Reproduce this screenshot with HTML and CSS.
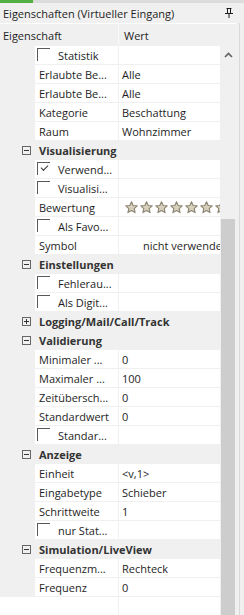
FILE: index.html
```html
<!DOCTYPE html>
<html lang="de">
<head>
    <meta charset="UTF-8">
    <title>Eigenschaften</title>
    <link rel="stylesheet" href="styles.css">
</head>
<body>
<div class="window">
    <div class="tabstrip"><span class="tab-accent"></span></div>
    <div class="titlebar">
        <span class="title">Eigenschaften (Virtueller Eingang)</span>
        <svg class="pin" width="8" height="10" viewBox="0 0 8 10">
            <path d="M1.5 0.5h5M2.5 0.5v5M5.5 0.5v5M0 5.5h8M4 5.5v4.5" stroke="#1e1e1e" stroke-width="1" fill="none"/>
            <rect x="2" y="1" width="1" height="4" fill="#1e1e1e"/>
        </svg>
    </div>
    <div class="content">
        <div class="grid">
            <div class="header">
                <div class="hcell hname">Eigenschaft</div>
                <div class="hcell hvalue">Wert</div>
            </div>
            <div class="body">
                <div class="rows">
                    <div class="row"><div class="gutter"></div><div class="name check"><span class="box"></span>Statistik</div><div class="value"></div></div>
                    <div class="row"><div class="gutter"></div><div class="name">Erlaubte Be...</div><div class="value">Alle</div></div>
                    <div class="row"><div class="gutter"></div><div class="name">Erlaubte Be...</div><div class="value">Alle</div></div>
                    <div class="row"><div class="gutter"></div><div class="name">Kategorie</div><div class="value">Beschattung</div></div>
                    <div class="row"><div class="gutter"></div><div class="name">Raum</div><div class="value">Wohnzimmer</div></div>

                    <div class="row cat"><div class="gutter"><span class="toggle"></span></div><div class="cat-label">Visualisierung</div></div>
                    <div class="row"><div class="gutter"></div><div class="name check"><span class="box checked"></span>Verwend...</div><div class="value"></div></div>
                    <div class="row"><div class="gutter"></div><div class="name check"><span class="box"></span>Visualisi...</div><div class="value"></div></div>
                    <div class="row"><div class="gutter"></div><div class="name">Bewertung</div><div class="value stars">
                        <svg width="110" height="13" viewBox="0 0 110 13">
                            <defs>
                                <path id="star" d="M6.5 0.8l1.7 3.7 4 0.4-3 2.7 0.9 4-3.6-2.1-3.6 2.1 0.9-4-3-2.7 4-0.4z"/>
                            </defs>
                            <g fill="#d6d0bd" stroke="#8c8470" stroke-width="1.1" stroke-linejoin="round">
                                <use href="#star" x="0"/>
                                <use href="#star" x="15"/>
                                <use href="#star" x="30"/>
                                <use href="#star" x="45"/>
                                <use href="#star" x="60"/>
                                <use href="#star" x="75"/>
                                <use href="#star" x="90"/>
                            </g>
                        </svg>
                    </div></div>
                    <div class="row"><div class="gutter"></div><div class="name check"><span class="box"></span>Als Favo...</div><div class="value"></div></div>
                    <div class="row"><div class="gutter"></div><div class="name">Symbol</div><div class="value indent">nicht verwendet</div></div>

                    <div class="row cat"><div class="gutter"><span class="toggle"></span></div><div class="cat-label">Einstellungen</div></div>
                    <div class="row"><div class="gutter"></div><div class="name check"><span class="box"></span>Fehlerau...</div><div class="value"></div></div>
                    <div class="row"><div class="gutter"></div><div class="name check"><span class="box"></span>Als Digit...</div><div class="value"></div></div>

                    <div class="row cat"><div class="gutter"><span class="toggle plus"></span></div><div class="cat-label">Logging/Mail/Call/Track</div></div>

                    <div class="row cat"><div class="gutter"><span class="toggle"></span></div><div class="cat-label">Validierung</div></div>
                    <div class="row"><div class="gutter"></div><div class="name">Minimaler ...</div><div class="value">0</div></div>
                    <div class="row"><div class="gutter"></div><div class="name">Maximaler ...</div><div class="value">100</div></div>
                    <div class="row"><div class="gutter"></div><div class="name">Zeitübersch...</div><div class="value">0</div></div>
                    <div class="row"><div class="gutter"></div><div class="name">Standardwert</div><div class="value">0</div></div>
                    <div class="row"><div class="gutter"></div><div class="name check"><span class="box"></span>Standar...</div><div class="value"></div></div>

                    <div class="row cat"><div class="gutter"><span class="toggle"></span></div><div class="cat-label">Anzeige</div></div>
                    <div class="row"><div class="gutter"></div><div class="name">Einheit</div><div class="value">&lt;v,1&gt;</div></div>
                    <div class="row"><div class="gutter"></div><div class="name">Eingabetype</div><div class="value">Schieber</div></div>
                    <div class="row"><div class="gutter"></div><div class="name">Schrittweite</div><div class="value">1</div></div>
                    <div class="row"><div class="gutter"></div><div class="name check"><span class="box"></span>nur Stat...</div><div class="value"></div></div>

                    <div class="row cat"><div class="gutter"><span class="toggle"></span></div><div class="cat-label">Simulation/LiveView</div></div>
                    <div class="row"><div class="gutter"></div><div class="name">Frequenzm...</div><div class="value">Rechteck</div></div>
                    <div class="row"><div class="gutter"></div><div class="name">Frequenz</div><div class="value">0</div></div>

                    <div class="filler"><div class="filler-name"></div></div>
                </div>
                <div class="scrollbar">
                    <div class="arrow">
                        <svg width="9" height="6" viewBox="0 0 9 6"><path d="M1 5l3.5-3.5 3.5 3.5" stroke="#606060" stroke-width="1.6" fill="none"/></svg>
                    </div>
                    <div class="thumb"></div>
                </div>
            </div>
        </div>
        <div class="edge"></div>
    </div>
</div>
</body>
</html>
```

FILE: styles.css
```css
/* Eigenschaften panel */
body {
    margin: 0;
    padding: 0;
    background-color: #f0f0f0;
}

.window {
    width: 244px;
    height: 615px;
    overflow: hidden;
    display: flex;
    flex-direction: column;
    background-color: #f0f0f0;
    font-family: "Open Sans", "Noto Sans", sans-serif;
    font-size: 11px;
    color: #1e1e1e;
}

.tabstrip {
    height: 3px;
    background-color: #dcdcdc;
    flex-shrink: 0;
}

.tab-accent {
    display: block;
    width: 33px;
    height: 3px;
    background-color: #52b043;
}

.titlebar {
    height: 20px;
    flex-shrink: 0;
    display: flex;
    align-items: center;
    justify-content: space-between;
    padding: 0 11px 0 3px;
    color: #1e1e1e;
}

.pin {
    display: block;
}

.content {
    flex: 1;
    display: flex;
    min-height: 0;
}

.grid {
    width: 236px;
    display: flex;
    flex-direction: column;
    border-top: 1px solid #ffffff;
}

.edge {
    width: 4px;
    margin-left: 3px;
    border-left: 1px solid #d9d9d9;
}

.header {
    height: 22px;
    display: flex;
    flex-shrink: 0;
}

.hcell {
    display: flex;
    align-items: center;
}

.hname {
    width: 115px;
    padding-left: 3px;
    border-right: 1px solid #fafafa;
}

.hvalue {
    flex: 1;
    padding-left: 5px;
}

.body {
    flex: 1;
    display: flex;
    min-height: 0;
}

.rows {
    width: 220px;
    display: flex;
    flex-direction: column;
}

.row {
    height: 19px;
    display: flex;
    flex-shrink: 0;
}

.gutter {
    width: 35px;
    flex-shrink: 0;
    position: relative;
}

.name,
.value {
    background-color: #ffffff;
    border-bottom: 1px solid #f0f0f0;
    display: flex;
    align-items: center;
    white-space: nowrap;
    overflow: hidden;
}

.name {
    width: 79px;
    padding-left: 4px;
    border-right: 1px solid #f0f0f0;
}

.value {
    flex: 1;
    padding-left: 3px;
}

.value.indent {
    padding-left: 24px;
}

.value.stars {
    padding-left: 6px;
}

.value.stars svg {
    display: block;
    flex-shrink: 0;
}

.name.check {
    padding-left: 2px;
    width: 81px;
}

.box {
    width: 13px;
    height: 13px;
    box-sizing: border-box;
    border-top: 1px solid #5a5a5a;
    border-left: 1px solid #5a5a5a;
    margin-right: 8px;
    margin-top: -2px;
    position: relative;
    flex-shrink: 0;
}

.box.checked::after {
    content: "";
    position: absolute;
    left: 3px;
    top: 2px;
    width: 6px;
    height: 3px;
    border-left: 1px solid #303030;
    border-bottom: 1px solid #303030;
    transform: rotate(-45deg);
}

.cat-label {
    flex: 1;
    display: flex;
    align-items: center;
    padding-left: 4px;
    font-weight: bold;
    color: #333333;
}

.toggle {
    position: absolute;
    left: 22px;
    top: 5px;
    width: 9px;
    height: 9px;
    box-sizing: border-box;
    border: 1px solid #666666;
}

.toggle::before {
    content: "";
    position: absolute;
    left: 1px;
    top: 3px;
    width: 5px;
    height: 1px;
    background-color: #333333;
}

.toggle.plus::after {
    content: "";
    position: absolute;
    left: 3px;
    top: 1px;
    width: 1px;
    height: 5px;
    background-color: #333333;
}

.filler {
    flex: 1;
    background-color: #ffffff;
    display: flex;
}

.filler-name {
    width: 118px;
    border-right: 1px solid #f0f0f0;
}

.scrollbar {
    width: 16px;
    display: flex;
    flex-direction: column;
    align-items: center;
}

.arrow {
    height: 17px;
    width: 16px;
    display: flex;
    align-items: center;
    justify-content: center;
}

.arrow svg {
    display: block;
}

.thumb {
    margin-top: 156px;
    width: 14px;
    flex: 1;
    background-color: #cdcdcd;
}
```
